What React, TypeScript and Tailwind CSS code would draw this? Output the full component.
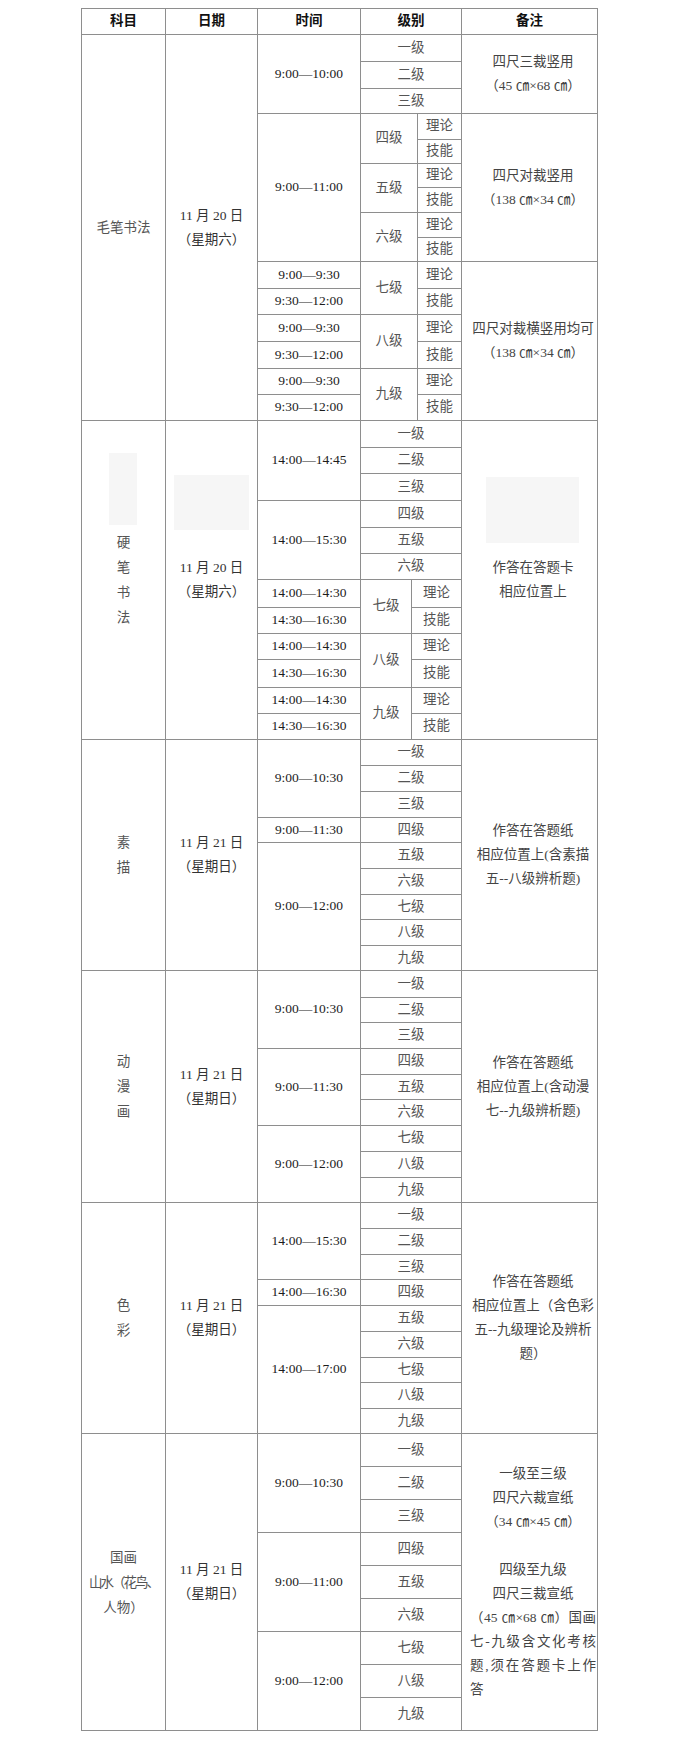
import type { ReactNode } from 'react';
import clsx from 'clsx';

const levels = ['一级', '二级', '三级', '四级', '五级', '六级', '七级', '八级', '九级'];

const spanClass: Record<number, string> = {
  1: '',
  3: 'row-span-3',
  5: 'row-span-5',
  6: 'row-span-6',
};

function Cell({ className, children }: { className?: string; children?: ReactNode }) {
  return (
    <div className={clsx('flex items-center justify-center bg-white text-center', className)}>
      {children}
    </div>
  );
}

function Time({ className, children }: { className?: string; children: ReactNode }) {
  return <Cell className={clsx('text-[#1c1c1c]', className)}>{children}</Cell>;
}

function Lv({ className, children }: { className?: string; children: ReactNode }) {
  return <Cell className={clsx('text-[#555]', className)}>{children}</Cell>;
}

function DateCell({ className, day, week }: { className?: string; day: string; week: string }) {
  return (
    <Cell className={clsx('flex-col leading-[24px] text-[#333]', className)}>
      <span>{day}</span>
      <span>{week}</span>
    </Cell>
  );
}

function Note({ className, lines }: { className?: string; lines: string[] }) {
  return (
    <Cell className={clsx('flex-col pl-[7px] leading-[24px] text-[#444]', className)}>
      {lines.map((l, i) => (
        <span key={i} className="whitespace-nowrap">
          {l}
        </span>
      ))}
    </Cell>
  );
}

function Subject({ className, lines }: { className?: string; lines: string[] }) {
  return (
    <Cell className={clsx('flex-col leading-[25px] text-[#555]', className)}>
      {lines.map((l, i) => (
        <span key={i} className="whitespace-nowrap">
          {l}
        </span>
      ))}
    </Cell>
  );
}

function Group({ children }: { children: ReactNode }) {
  return <>{children}</>;
}

// 素描 / 动漫画 / 色彩 / 国画: nine plain levels, time slots grouped
function SimpleBlock({
  rows,
  subject,
  day,
  times,
  note,
}: {
  rows: string;
  subject: ReactNode;
  day: string;
  times: [string, number][];
  note: ReactNode;
}) {
  const starts: Record<number, [string, number]> = {};
  let at = 0;
  times.forEach((t) => {
    starts[at] = t;
    at += t[1];
  });

  return (
    <div className={clsx('grid grid-cols-[83px_91px_102px_100px_135px] gap-px', rows)}>
      {subject}
      <DateCell className="row-span-9" day={day} week="（星期日）" />
      {levels.map((lv, i) => (
        <Group key={lv}>
          {starts[i] && <Time className={spanClass[starts[i][1]]}>{starts[i][0]}</Time>}
          <Lv>{lv}</Lv>
          {i === 0 && note}
        </Group>
      ))}
    </div>
  );
}

export default function App() {
  return (
    <div className="min-h-[1737px] bg-white pt-2 font-['Liberation_Serif','Noto_Sans_CJK_SC',serif] text-[13.5px]">
      <div className="ml-[81px] flex w-[517px] flex-col gap-px bg-[#8e8e8e] p-px">
        {/* header */}
        <div className="grid grid-cols-[83px_91px_102px_100px_135px] grid-rows-[25px] gap-px font-bold text-[#111]">
          <Cell>科目</Cell>
          <Cell>日期</Cell>
          <Cell>时间</Cell>
          <Cell>级别</Cell>
          <Cell>备注</Cell>
        </div>

        {/* 毛笔书法 */}
        <div className="grid grid-cols-[83px_91px_102px_56px_43px_135px] grid-rows-[26px_26px_24px_25px_23px_23px_24px_24px_23px_26px_25px_26px_26px_25px_25px] gap-px">
          <Subject className="row-span-15" lines={['毛笔书法']} />
          <DateCell className="row-span-15" day="11 月 20 日" week="（星期六）" />
          <Time className="row-span-3">9:00—10:00</Time>
          <Lv className="col-span-2">一级</Lv>
          <Note className="row-span-3" lines={['四尺三裁竖用', '（45 ㎝×68 ㎝）']} />
          <Lv className="col-span-2">二级</Lv>
          <Lv className="col-span-2">三级</Lv>

          <Time className="row-span-6">9:00—11:00</Time>
          <Lv className="row-span-2">四级</Lv>
          <Lv>理论</Lv>
          <Note className="row-span-6" lines={['四尺对裁竖用', '（138 ㎝×34 ㎝）']} />
          <Lv>技能</Lv>
          <Lv className="row-span-2">五级</Lv>
          <Lv>理论</Lv>
          <Lv>技能</Lv>
          <Lv className="row-span-2">六级</Lv>
          <Lv>理论</Lv>
          <Lv>技能</Lv>

          <Time>9:00—9:30</Time>
          <Lv className="row-span-2">七级</Lv>
          <Lv>理论</Lv>
          <Note className="row-span-6" lines={['四尺对裁横竖用均可', '（138 ㎝×34 ㎝）']} />
          <Time>9:30—12:00</Time>
          <Lv>技能</Lv>
          <Time>9:00—9:30</Time>
          <Lv className="row-span-2">八级</Lv>
          <Lv>理论</Lv>
          <Time>9:30—12:00</Time>
          <Lv>技能</Lv>
          <Time>9:00—9:30</Time>
          <Lv className="row-span-2">九级</Lv>
          <Lv>理论</Lv>
          <Time>9:30—12:00</Time>
          <Lv>技能</Lv>
        </div>

        {/* 硬笔书法 */}
        <div className="grid grid-cols-[83px_91px_102px_50px_49px_135px] grid-rows-[26px_25px_26px_26px_25px_25px_27px_25px_25px_27px_25px_25px] gap-px">
          <Cell className="relative row-span-12 flex-col leading-[25px] text-[#555]">
            <span className="absolute left-[27px] top-[32px] h-[72px] w-[28px] bg-[#f6f6f6]" />
            <span className="relative">硬</span>
            <span className="relative">笔</span>
            <span className="relative">书</span>
            <span className="relative">法</span>
          </Cell>
          <Cell className="relative row-span-12 flex-col leading-[24px] text-[#333]">
            <span className="absolute left-[8px] top-[54px] h-[55px] w-[75px] bg-[#f6f6f6]" />
            <span className="relative">11 月 20 日</span>
            <span className="relative">（星期六）</span>
          </Cell>
          <Time className="row-span-3">14:00—14:45</Time>
          <Lv className="col-span-2">一级</Lv>
          <Cell className="relative row-span-12 flex-col pl-[7px] leading-[24px] text-[#444]">
            <span className="absolute left-[24px] top-[56px] h-[66px] w-[93px] bg-[#f6f6f6]" />
            <span className="relative">作答在答题卡</span>
            <span className="relative">相应位置上</span>
          </Cell>
          <Lv className="col-span-2">二级</Lv>
          <Lv className="col-span-2">三级</Lv>
          <Time className="row-span-3">14:00—15:30</Time>
          <Lv className="col-span-2">四级</Lv>
          <Lv className="col-span-2">五级</Lv>
          <Lv className="col-span-2">六级</Lv>

          <Time>14:00—14:30</Time>
          <Lv className="row-span-2">七级</Lv>
          <Lv>理论</Lv>
          <Time>14:30—16:30</Time>
          <Lv>技能</Lv>
          <Time>14:00—14:30</Time>
          <Lv className="row-span-2">八级</Lv>
          <Lv>理论</Lv>
          <Time>14:30—16:30</Time>
          <Lv>技能</Lv>
          <Time>14:00—14:30</Time>
          <Lv className="row-span-2">九级</Lv>
          <Lv>理论</Lv>
          <Time>14:30—16:30</Time>
          <Lv>技能</Lv>
        </div>

        {/* 素描 */}
        <SimpleBlock
          rows="grid-rows-[25px_25px_25px_24px_25px_25px_24px_25px_24px]"
          subject={<Subject className="row-span-9" lines={['素', '描']} />}
          day="11 月 21 日"
          times={[
            ['9:00—10:30', 3],
            ['9:00—11:30', 1],
            ['9:00—12:00', 5],
          ]}
          note={
            <Note
              className="row-span-9"
              lines={['作答在答题纸', '相应位置上(含素描', '五--八级辨析题)']}
            />
          }
        />

        {/* 动漫画 */}
        <SimpleBlock
          rows="grid-rows-[26px_24px_25px_25px_24px_25px_25px_25px_24px]"
          subject={<Subject className="row-span-9" lines={['动', '漫', '画']} />}
          day="11 月 21 日"
          times={[
            ['9:00—10:30', 3],
            ['9:00—11:30', 3],
            ['9:00—12:00', 3],
          ]}
          note={
            <Note
              className="row-span-9"
              lines={['作答在答题纸', '相应位置上(含动漫', '七--九级辨析题)']}
            />
          }
        />

        {/* 色彩 */}
        <SimpleBlock
          rows="grid-rows-[25px_25px_24px_25px_25px_25px_24px_25px_24px]"
          subject={<Subject className="row-span-9" lines={['色', '彩']} />}
          day="11 月 21 日"
          times={[
            ['14:00—15:30', 3],
            ['14:00—16:30', 1],
            ['14:00—17:00', 5],
          ]}
          note={
            <Note
              className="row-span-9"
              lines={['作答在答题纸', '相应位置上（含色彩', '五--九级理论及辨析', '题）']}
            />
          }
        />

        {/* 国画 */}
        <SimpleBlock
          rows="grid-rows-[repeat(9,32px)]"
          subject={
            <Cell className="row-span-9 flex-col leading-[25px] text-[#555]">
              <span>国画</span>
              <span className="whitespace-nowrap tracking-[-2px]">山水（花鸟、</span>
              <span className="whitespace-nowrap">人物）</span>
            </Cell>
          }
          day="11 月 21 日"
          times={[
            ['9:00—10:30', 3],
            ['9:00—11:00', 3],
            ['9:00—12:00', 3],
          ]}
          note={
            <Cell className="row-span-9 flex-col items-stretch pl-2 pr-px leading-[24px] text-[#444]">
              <span>一级至三级</span>
              <span>四尺六裁宣纸</span>
              <span className="whitespace-nowrap">（34 ㎝×45 ㎝）</span>
              <span>&nbsp;</span>
              <span>四级至九级</span>
              <span>四尺三裁宣纸</span>
              <span className="whitespace-nowrap text-justify [text-align-last:justify]">（45 ㎝×68 ㎝）国画</span>
              <span className="whitespace-nowrap text-justify [text-align-last:justify]">七-九级含文化考核</span>
              <span className="whitespace-nowrap text-justify [text-align-last:justify]">题,须在答题卡上作</span>
              <span className="text-left">答</span>
            </Cell>
          }
        />
      </div>
    </div>
  );
}
